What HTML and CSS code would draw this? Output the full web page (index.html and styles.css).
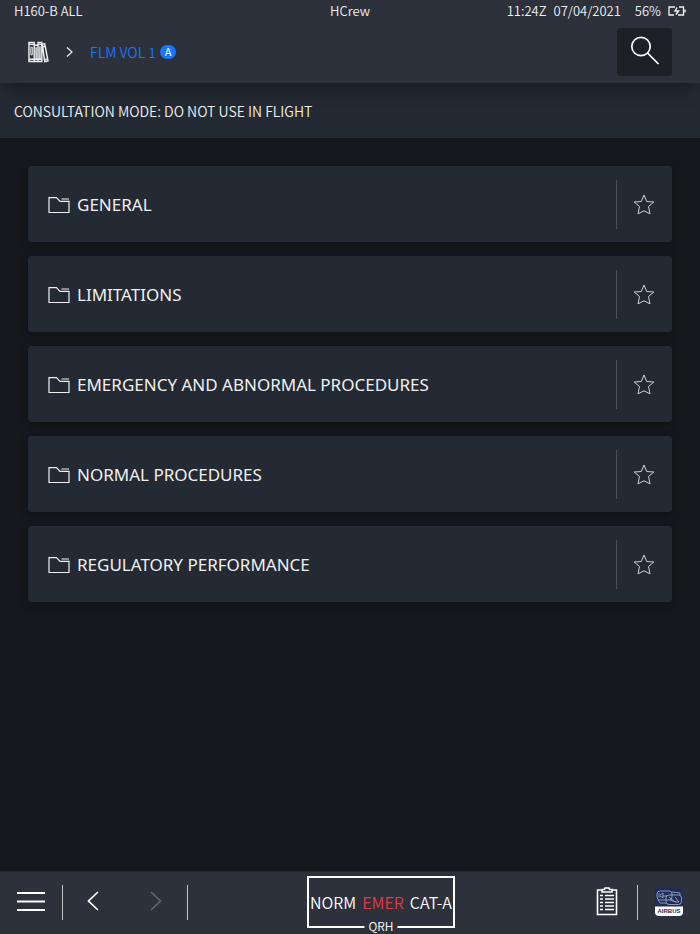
FILE: index.html
```html
<!DOCTYPE html>
<html lang="en">
<head>
    <meta charset="UTF-8">
    <meta name="viewport" content="width=device-width, initial-scale=1">
    <title>HCrew</title>
    <link rel="stylesheet" href="styles.css">
</head>
<body>
    <!-- Status bar and breadcrumb -->
    <header class="header">
        <div class="status">
            <span>H160-B ALL</span>
            <span>HCrew</span>
            <div class="status-right">
                <span>11:24Z</span>
                <span>07/04/2021</span>
                <span class="battery">56%
                    <svg width="18" height="10" viewBox="0 0 18 10" fill="none" stroke="currentColor" stroke-width="1.3">
                        <path d="M7 1H1V9H6M11 1H15.500V9H10M17 3.500V6.500"/>
                        <path d="M9 1.500L7 5H10.500L8 8.500" stroke-width="1.500"/>
                    </svg>
                </span>
            </div>
        </div>
        <div class="nav">
            <nav class="breadcrumb">
                <a href="#" aria-label="Library">
                    <svg class="books" width="21" height="22" viewBox="0 0 22 22" fill="none" stroke="currentColor" stroke-width="1.500">
                        <path d="M1 1H6.500V21H1ZM6.500 4H10.500V21H6.500ZM10.500 1H14.500V21H10.500ZM15 3L17.500 2.200L21 20.300L17.500 21ZM1 3H6.500M10.500 3H14.500M8.500 6V19M12.500 5V19M1 18.500H14.500M15.700 5.500L18 5M17 19L20.500 18.200"/>
                        <path d="M3 6H4.500V14H3Z" stroke-width="1"/>
                    </svg>
                </a>
                <svg class="crumb-arrow" width="7" height="10" viewBox="0 0 7 10" fill="none" stroke="currentColor" stroke-width="1.200">
                    <path d="M1 0.500L6 5L1 9.500"/>
                </svg>
                <a href="#" class="crumb">FLM VOL 1 <span class="badge">A</span></a>
            </nav>
            <button class="search" type="button" aria-label="Search">
                <svg width="30" height="30" viewBox="0 0 30 30" fill="none" stroke="currentColor" stroke-width="1.700">
                    <circle cx="11" cy="10.500" r="9.200"/>
                    <path d="M17.500 17L28.500 28"/>
                </svg>
            </button>
        </div>
    </header>

    <div class="notice">CONSULTATION MODE: DO NOT USE IN FLIGHT</div>

    <!-- Shared icons -->
    <svg class="sprite" width="0" height="0">
        <symbol id="folder" viewBox="0 0 22 17">
            <path d="M1 15.500V0.700H8.500L12 4.400H21V15.500ZM13.500 2H21" fill="none" stroke="currentColor" stroke-width="1.200"/>
        </symbol>
        <symbol id="star" viewBox="0 0 22 22">
            <path d="M11 1L13.700 7.500L20.800 8L15.500 12.500L17 19.800L11 16.800L5 19.800L6.500 12.500L1.200 8L8.300 7.500Z" fill="none" stroke="currentColor" stroke-width="1"/>
        </symbol>
    </svg>

    <!-- Manual sections -->
    <main class="list">
        <div class="card">
            <a href="#" class="card-link"><svg width="22" height="17"><use href="#folder"/></svg>GENERAL</a>
            <button class="star" type="button" aria-label="Bookmark"><svg width="22" height="22"><use href="#star"/></svg></button>
        </div>
        <div class="card">
            <a href="#" class="card-link"><svg width="22" height="17"><use href="#folder"/></svg>LIMITATIONS</a>
            <button class="star" type="button" aria-label="Bookmark"><svg width="22" height="22"><use href="#star"/></svg></button>
        </div>
        <div class="card">
            <a href="#" class="card-link"><svg width="22" height="17"><use href="#folder"/></svg>EMERGENCY AND ABNORMAL PROCEDURES</a>
            <button class="star" type="button" aria-label="Bookmark"><svg width="22" height="22"><use href="#star"/></svg></button>
        </div>
        <div class="card">
            <a href="#" class="card-link"><svg width="22" height="17"><use href="#folder"/></svg>NORMAL PROCEDURES</a>
            <button class="star" type="button" aria-label="Bookmark"><svg width="22" height="22"><use href="#star"/></svg></button>
        </div>
        <div class="card">
            <a href="#" class="card-link"><svg width="22" height="17"><use href="#folder"/></svg>REGULATORY PERFORMANCE</a>
            <button class="star" type="button" aria-label="Bookmark"><svg width="22" height="22"><use href="#star"/></svg></button>
        </div>
    </main>

    <!-- Bottom toolbar -->
    <footer class="toolbar">
        <div class="tools">
            <button type="button" aria-label="Menu">
                <svg width="28" height="22" viewBox="0 0 28 22" stroke="currentColor" stroke-width="2"><path d="M0 2H28M0 10.500H28M0 19H28"/></svg>
            </button>
            <span class="divider"></span>
            <button class="arrow-btn" type="button" aria-label="Back">
                <svg width="14" height="22" viewBox="0 0 14 22" fill="none" stroke="currentColor" stroke-width="1.700"><path d="M11 1L1.500 10L11 19"/></svg>
            </button>
            <button class="arrow-btn" type="button" aria-label="Forward" disabled>
                <svg width="12" height="22" viewBox="0 0 12 22" fill="none" stroke="currentColor" stroke-width="1.700"><path d="M1 1L10.500 10L1 19"/></svg>
            </button>
            <span class="divider"></span>
        </div>
        <div class="qrh">
            <button type="button">NORM</button>
            <button class="emer" type="button">EMER</button>
            <button type="button">CAT-A</button>
            <span class="qrh-label">QRH</span>
        </div>
        <div class="tools tools-right">
            <button type="button" aria-label="Checklist">
                <svg width="24" height="31" viewBox="0 0 24 31" fill="none" stroke="currentColor" stroke-width="1.600">
                    <path d="M6 3H1.500V27.500H20.500V3H16"/>
                    <path d="M6 5V2.500H8.500L9 1H13L13.500 2.500H16V5Z"/>
                    <path d="M4 8.500H7M9 8.500H18M4 12H7M9 12H18M4 15.500H7M9 15.500H18M4 19H7M9 19H18M4 22.500H7M9 22.500H18"/>
                </svg>
            </button>
            <span class="divider"></span>
            <button type="button" aria-label="Airbus">
                <svg width="28" height="28" viewBox="0 0 28 28">
                    <path d="M4 0H24Q28 0 28 4V19H0V4Q0 0 4 0Z" fill="#1f2c58"/>
                    <path d="M0 18.500H28V24Q28 28 24 28H4Q0 28 0 24Z" fill="#fff"/>
                    <g fill="none" stroke="#aab3cd" stroke-width="0.800">
                        <rect x="2" y="3" width="15" height="9" rx="3"/>
                        <rect x="11" y="7" width="15.500" height="9.500" rx="3"/>
                        <path d="M4 5.500V9.500M5 7L8 5V10L5 8M8 8H12M14 9L20 14H24L20 9M15 12L21 14M17 4L25 5V7M3 12L5 15H11"/>
                    </g>
                    <text class="logo-text" x="14" y="25" text-anchor="middle">AIRBUS</text>
                </svg>
            </button>
        </div>
    </footer>
</body>
</html>
```
FILE: styles.css
```css
* {
    box-sizing: border-box;
}

body {
    display: flex;
    flex-direction: column;
    min-height: 100vh;
    margin: 0;
    background-color: #15181c;
    color: #f0f0f0;
    font-family: "Noto Sans CJK JP", "Noto Sans", sans-serif;
    font-size: 13px;
    font-weight: 350;
}

a {
    color: inherit;
    text-decoration: none;
}

button {
    padding: 0;
    border: none;
    background: none;
    color: inherit;
    font: inherit;
    cursor: pointer;
}

svg {
    display: block;
}

.sprite {
    position: absolute;
}

/* Header */
.header {
    position: relative;
    background-color: #2c313c;
    box-shadow: 0 12px 16px -6px rgba(0, 0, 0, 0.35);
}

.status {
    display: grid;
    grid-template-columns: 1fr auto 1fr;
    padding: 0 14px;
    line-height: 22px;
}

.status-right {
    display: flex;
    justify-content: flex-end;
    gap: 7px;
}

.battery {
    display: flex;
    align-items: center;
    gap: 7px;
    margin-left: 7px;
}

.nav {
    display: flex;
    justify-content: space-between;
    align-items: center;
    padding: 6px 28px 7px;
}

.breadcrumb {
    display: flex;
    align-items: center;
}

.crumb-arrow {
    margin: 0 17px;
}

.crumb {
    display: flex;
    align-items: center;
    gap: 4px;
    color: #1a75ff;
    font-size: 14px;
    line-height: 20px;
}

.badge {
    width: 16px;
    height: 14px;
    border-radius: 8px;
    background-color: #1a75ff;
    color: #fff;
    font-size: 11px;
    font-weight: 400;
    line-height: 13px;
    text-align: center;
}

.search {
    display: flex;
    justify-content: center;
    width: 55px;
    height: 48px;
    padding-top: 8px;
    border-radius: 3px;
    background-color: #1d2127;
    color: #fff;
}

.notice {
    padding: 16px 14px 15px;
    background-color: #242a33;
    font-size: 14px;
    line-height: 24px;
}

/* Section cards */
.list {
    display: flex;
    flex: 1;
    flex-direction: column;
    gap: 14px;
    padding: 28px;
}

.card {
    display: flex;
    align-items: center;
    height: 76px;
    border-radius: 3px;
    background-color: #242a33;
    box-shadow: 0 2px 8px rgba(0, 0, 0, 0.3);
    font-family: "Noto Sans", sans-serif;
    font-size: 17px;
    font-weight: 400;
}

.card-link {
    display: flex;
    flex: 1;
    align-items: center;
    gap: 7px;
    padding: 2px 0 0 20px;
    line-height: 48px;
}

.star {
    display: flex;
    justify-content: center;
    align-items: center;
    width: 56px;
    height: 49px;
    padding: 1px 1px 0 0;
    border-left: 1px solid #4b4f57;
    color: #d0d1d3;
}

/* Bottom toolbar */
.toolbar {
    display: grid;
    grid-template-columns: 1fr auto 1fr;
    align-items: center;
    height: 63px;
    padding: 0 17px 2px;
    border-top: 1px solid #262b34;
    background-color: #2c313c;
    color: #fff;
}

.tools {
    display: flex;
    align-items: center;
    gap: 17px;
}

.tools-right {
    justify-content: flex-end;
}

.divider {
    width: 1px;
    height: 35px;
    background-color: #c0c2c6;
}

.arrow-btn {
    display: flex;
    justify-content: center;
    width: 28px;
}

.arrow-btn + .arrow-btn {
    margin-left: 17px;
}

.arrow-btn:disabled {
    color: #626670;
}

.qrh {
    position: relative;
    display: flex;
    justify-content: center;
    gap: 6px;
    width: 148px;
    margin-left: 62px;
    border: 2px solid #fff;
    font-size: 16px;
    line-height: 48px;
}

.emer {
    color: #e53a3e;
}

.qrh-label {
    position: absolute;
    bottom: -8px;
    left: 50%;
    padding: 0 4px;
    background-color: #2c313c;
    font-size: 12px;
    line-height: 16px;
    transform: translateX(-50%);
}

.logo-text {
    fill: #1f2c58;
    font-family: "Liberation Sans", sans-serif;
    font-size: 6px;
    font-weight: bold;
}
```
